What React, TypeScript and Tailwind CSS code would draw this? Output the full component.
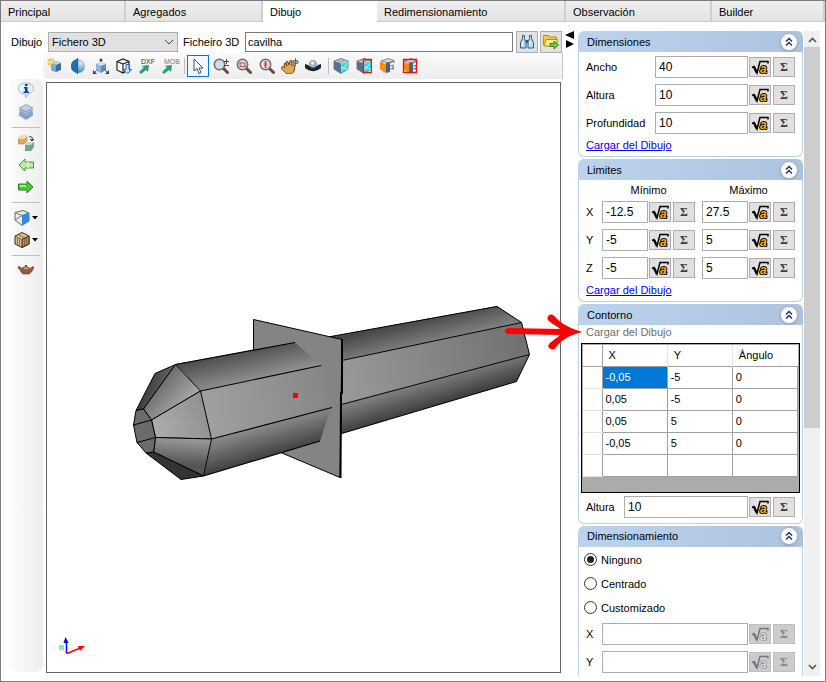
import React, { useState } from 'react';

const tabs = [
  { name: 'Principal', width: 'w-[125px]' },
  { name: 'Agregados', width: 'w-[137px]' },
  { name: 'Dibujo', width: 'w-[114px]' },
  { name: 'Redimensionamiento', width: 'w-[189px]' },
  { name: 'Observación', width: 'w-[146px]' },
  { name: 'Builder', width: 'flex-1' },
];

const points = [
  ['-0,05', '-5', '0'],
  ['0,05', '-5', '0'],
  ['0,05', '5', '0'],
  ['-0,05', '5', '0'],
  ['', '', ''],
];

const Icon = ({ children, w = 16 }: { children: React.ReactNode; w?: number }) => (
  <svg width={w} height="16" viewBox={`0 0 ${w} 16`} className="shrink-0" aria-hidden="true">
    {children}
  </svg>
);

/* ---------- toolbar icons ---------- */

const NewCubeIcon = () => (
  <Icon>
    <path d="M4 5l5-2 5 2v7l-5 2-5-2z" fill="#3f6f9f" />
    <path d="M4 5l5-2 5 2-5 2z" fill="#b4d2ea" />
    <path d="M4 5l5 2v7l-5-2z" fill="#7ba8d2" />
    <path d="M4 0v8M0 4h8M1 1l6 6M7 1L1 7" stroke="#e9b52c" strokeWidth="1.200" />
    <circle cx="4" cy="4" r="1.500" fill="#fff8c8" />
  </Icon>
);

const SphereIcon = () => (
  <Icon>
    <defs>
      <radialGradient id="sphere" cx="0.700" cy="0.300" r="0.700">
        <stop offset="0" stopColor="#d6ecfa" />
        <stop offset="1" stopColor="#3c82bd" />
      </radialGradient>
    </defs>
    <circle cx="8" cy="8" r="7" fill="url(#sphere)" />
    <path d="M8 1a7 7 0 0 0 0 14z" fill="#1b72b0" />
    <path d="M7.500 0v16" stroke="#e01818" />
  </Icon>
);

const AxesCubeIcon = () => (
  <Icon>
    <path d="M8 1v6M1 15l4-4M15 15l-4-4" stroke="#555" />
    <path d="M8 0l2 3H6zM0 16v-4l4 4zM16 16v-4l-4 4z" fill="#443c3c" />
    <path d="M3 6l5-2 5 2v6l-5 3-5-3z" fill="#5b8cbf" />
    <path d="M3 6l5-2 5 2-5 2z" fill="#cfe3f4" />
    <path d="M3 6l5 2v7l-5-3z" fill="#8db6dc" />
  </Icon>
);

const CubeDownIcon = () => (
  <Icon>
    <path d="M1 3.500L7 1l6 2.500v8L7 15l-6-3z M1 3.500L7 6l6-2.500M7 6v9" fill="#fff" stroke="#222" strokeWidth="1.200" />
    <path d="M10 6.500h3v5h2.500L11.500 15.500 7.500 11.500H10z" fill="#cfe4ff" stroke="#1b5fd0" />
  </Icon>
);

const ExportIcon = ({ label, color }: { label: string; color: string }) => (
  <Icon w={20}>
    <path d="M2 14l5-5-3-1 8-1-1 7-2-2-5 4z" fill="#2f9e77" />
    <text x="4" y="6" fontSize="7" fill={color}>{label}</text>
  </Icon>
);

const CursorIcon = () => (
  <Icon>
    <path d="M4 1v12l3-2.500 2 5 2-1-2-4.500h4z" fill="#fff" stroke="#3c4a70" />
  </Icon>
);

const ZoomIcon = ({ children, lens = '#cfdce4' }: { children?: React.ReactNode; lens?: string }) => (
  <Icon>
    <path d="M9.500 9.500l5 5" stroke="#6a4a3e" strokeWidth="3" strokeLinecap="round" />
    <circle cx="6.500" cy="6.500" r="5.200" fill={lens} stroke="#6d6d6d" strokeWidth="1.500" />
    {children}
  </Icon>
);

const HandIcon = () => (
  <Icon w={18}>
    <path d="M1 9c1-1 2 0 3 1L3 6c0-1 2-1 2 0l1 2-1-4c0-1 2-1 2 0l1 3 1-4c0-1 2-1 2 0v5l1-1c1-1 2 0 2 1l-1 5c-1 2-2 3-4 3H7c-2 0-3-2-6-5-1-1-1-2 0-2z" fill="#e0aa55" stroke="#6e4112" />
    <path d="M14.500 0v8M10.500 4h8M12.500 2.500h4v3h-4z" stroke="#555" fill="none" strokeWidth="0.800" />
  </Icon>
);

const OrbitIcon = () => (
  <Icon>
    <path d="M0 6l3 1c2 2 8 2 10 0l3-1v4l-3 2c-3 1.500-7 1.500-10 0L0 10z" fill="#222" />
    <circle cx="8" cy="6" r="3.600" fill="#9db9d8" stroke="#6f8cad" strokeWidth="0.700" />
    <circle cx="7.500" cy="5" r="1.500" fill="#eef6ff" />
  </Icon>
);

const ViewCubeIcon = ({ boxed = false }: { boxed?: boolean }) => (
  <Icon>
    <path d="M1 3l7-2.500L15 3v8l-7 4.500L1 11z" fill="#c8d4d8" stroke="#55636f" strokeWidth="0.800" />
    <path d="M4 2l7 2.500M12 2L5 4.500" stroke="#7d8a90" strokeWidth="0.600" />
    <path d="M1 3l7 2.500v10L1 11z" fill="#5d6d8f" />
    <path d="M8.500 6L15 3.500V11l-6.500 4z" fill="#1fe0e6" />
    <path d="M8.500 12l6-7M8.500 9l6 2" stroke="#e8ffff" strokeWidth="0.800" />
    {boxed && <path d="M7.500 1.500h8v13h-8z" fill="none" stroke="#f01010" strokeWidth="1.300" />}
  </Icon>
);

const SectionCubeIcon = ({ boxed = false }: { boxed?: boolean }) => (
  <Icon>
    <path d="M2 3l7-2.500 6 2L9 5z" fill="#d4d8da" stroke="#666" strokeWidth="0.700" />
    <path d="M7 5l4-1v10l-4 1z" fill="#536079" />
    <path d="M11 5l4-2M11 8l4-1M11 11l4-1M15 3v2M14 8v4" stroke="#777" fill="none" />
    <path d="M1 3.500L7 6v9l-6-3.500z" fill="#fb8c0c" />
    {boxed && <path d="M1.500 1.500h13v13h-13z" fill="none" stroke="#f01010" strokeWidth="1.300" />}
  </Icon>
);

/* ---------- sidebar icons ---------- */

const InfoIcon = () => (
  <Icon>
    <path d="M8 1c4 0 7.500 2 7.500 5.500S12 12 9.500 12L8 15.500 6.500 12C3 12 .5 10 .5 6.500S4 1 8 1z" fill="#e8f2fc" stroke="#9db8d4" />
    <path d="M7 2h2.500v2H7zM6 5h3.500v4.500H11V11H5.500V9.500H7v-3H6z" fill="#0a3d9a" />
  </Icon>
);

const LayersIcon = () => (
  <Icon>
    <g stroke="#6f8fb4" strokeWidth="0.700">
      <path d="M1 11l7-3 7 3-7 4.500z" fill="#87a5c9" />
      <path d="M1 9l7-3 7 3-7 4z" fill="#98b3d3" />
      <path d="M1 6.500l7-3 7 3-7 4z" fill="#a6bedb" />
      <path d="M1 4l7-3.500L15 4 8 8z" fill="#bdd0e6" />
    </g>
  </Icon>
);

const SwapIcon = () => (
  <Icon>
    <path d="M0 4l3-3h6v5l-3 3H0z" fill="#d9a566" stroke="#b07d41" strokeWidth="0.500" />
    <path d="M0 4l3-3h6L7 4z" fill="#f4d9ae" />
    <path d="M7 10l3-3h6v5l-3 4H7z" fill="#6fa58c" />
    <path d="M7 10l3-3h6l-3 3z" fill="#b9dccb" />
    <path d="M11 2c2-1 4 0 3 3M12 4l2 2 2-2" stroke="#222" fill="none" />
  </Icon>
);

const ArrowLeftIcon = () => (
  <Icon>
    <path d="M1 8l6-6v3h8.500v6H7v3z" fill="#b9e8a8" stroke="#4c9a3a" />
    <path d="M10 5v6" stroke="#fff" />
  </Icon>
);

const ArrowRightIcon = () => (
  <Icon>
    <path d="M15 8L9 2v3H.5v6H9v3z" fill="#4cc636" stroke="#2a8a1c" />
    <path d="M2 7h6" stroke="#a8ec94" strokeWidth="2" />
  </Icon>
);

const FaceCubeIcon = () => (
  <Icon>
    <path d="M1 2.500L9 .5l6 2.500v8l-7 4.500L1 10z" fill="#e6e8ea" stroke="#686868" />
    <path d="M1 2.500l7 3 7-2.500M1 10l7-4.500" stroke="#777" fill="none" />
    <path d="M8 5.500L15 3v8l-7 4.500z" fill="#2d8be8" />
  </Icon>
);

const WoodCubeIcon = () => (
  <Icon>
    <path d="M1 4l7-3.500L15 4v8l-7 3.500L1 12z" fill="#dcbf92" stroke="#3b2a17" />
    <path d="M8 7.500L15 4v8l-7 3.500z" fill="#b58d5c" stroke="#3b2a17" />
    <path d="M1 4l7 3.500M3.500 5.500v7M5.500 6.500v7M10.500 7v7M12.500 6v7M4 2.500l7 3.500" stroke="#6b5030" strokeWidth="0.700" />
  </Icon>
);

const TeapotIcon = () => (
  <Icon>
    <g transform="translate(0 -2)">
      <path d="M0 6c1-1 3 0 4 2 0-3 7-3 8 0 1-1 2-3 4-2-1 3-3 6-5 7H5C3 12 3 9 0 7z" fill="#96593c" stroke="#5b3322" strokeWidth="0.600" />
      <path d="M7 4h2v1.500H7z" fill="#5b3322" />
      <path d="M6 8c1-1 3-1 4 0" stroke="#e0b296" strokeWidth="1.300" fill="none" />
    </g>
  </Icon>
);

const Caret = () => (
  <svg width="6" height="4" viewBox="0 0 6 4" aria-hidden="true">
    <path d="M0 0h6L3 3.500z" />
  </svg>
);

const BinocularsIcon = () => (
  <Icon>
    <g fill="#b5dbe6" stroke="#2d5f88">
      <path d="M3.500 1.500h2v3l1.500 4v5.500H1.500V8.500l2-4z" />
      <path d="M10.500 1.500h2v3l2 4V14H9V8.500l1.500-4z" />
    </g>
    <path d="M7 6h2v3H7z" fill="#2d5f88" />
    <path d="M3.500 7v5M11 7v5" stroke="#fff" />
  </Icon>
);

const FolderIcon = () => (
  <Icon>
    <path d="M.5 3.500v-2h5l1 1.500h7v8H.5z" fill="#f3cf45" stroke="#b78c12" />
    <path d="M3 5.500h11.500L13 12H1z" fill="#fdeb9c" stroke="#b78c12" />
    <path d="M7 9.500h4V7l4.500 4-4.500 4v-2.500H7z" fill="#7ac943" stroke="#3b7f1a" />
  </Icon>
);

const Separator = () => <span className="h-4 w-px shrink-0 bg-[#bdbdbd]" />;

/* ---------- form parts ---------- */

const FormulaButton = ({ disabled = false }: { disabled?: boolean }) => (
  <button
    aria-label="Fórmula"
    disabled={disabled}
    className="flex h-5 w-[22px] shrink-0 items-center justify-center border border-[#adadad] bg-[#e1e1e1] disabled:border-[#bfbfbf] disabled:bg-[#cccccc]"
  >
    <svg width="18" height="16" viewBox="0 0 18 16" className="shrink-0" aria-hidden="true">
      <path d="M1 8.500l2-1L6 14 9 2.500h8v2" fill="none" stroke={disabled ? '#777' : '#000'} strokeWidth="1.500" />
      <path d="M3 8l3 6" stroke={disabled ? '#777' : '#000'} strokeWidth="2.400" />
      <text
        x="9"
        y="14"
        fontSize="12"
        fontWeight="bold"
        fontStyle="italic"
        fill={disabled ? '#ddd' : '#ffb400'}
        stroke={disabled ? '#777' : '#000'}
        strokeWidth={disabled ? 1 : 2}
        paintOrder="stroke"
      >
        a
      </text>
    </svg>
  </button>
);

const SigmaButton = ({ disabled = false }: { disabled?: boolean }) => (
  <button
    aria-label="Suma"
    disabled={disabled}
    className="flex h-5 w-[22px] shrink-0 items-center justify-center border border-[#adadad] bg-[#e1e1e1] font-['Liberation_Serif',serif] text-xs leading-4 font-bold text-[#3c3c3c] disabled:border-[#bfbfbf] disabled:bg-[#cccccc] disabled:text-[#858585]"
  >
    Σ
  </button>
);

const NumberBox = ({ id, value, label, disabled = false }: { id?: string; value: string; label?: string; disabled?: boolean }) => (
  <div className="flex min-w-0 flex-1 items-center gap-[2px]">
    <input
      id={id}
      aria-label={label}
      defaultValue={value}
      disabled={disabled}
      className="-mr-px h-[22px] w-0 min-w-0 flex-1 border border-[#abadb3] bg-white px-[3px] text-xs"
    />
    <FormulaButton disabled={disabled} />
    <SigmaButton disabled={disabled} />
  </div>
);

const Field = ({ id, label, value, labelWidth, disabled }: { id: string; label: string; value: string; labelWidth: string; disabled?: boolean }) => (
  <div className="flex items-center">
    <label htmlFor={id} className={`${labelWidth} shrink-0`}>{label}</label>
    <NumberBox id={id} value={value} disabled={disabled} />
  </div>
);

const Panel = ({ title, className, children }: { title: string; className: string; children: React.ReactNode }) => (
  <section>
    <header className="flex h-[21px] items-center justify-between rounded-t-md bg-linear-to-r from-[#bcd3ee] to-[#adc2de] pr-[5px] pl-[9px]">
      <h2>{title}</h2>
      <button aria-label={`Contraer ${title}`} className="flex size-[18px] items-center justify-center rounded-full border border-[#a3aec0] bg-white shadow-sm">
        <svg width="8" height="10" viewBox="0 0 8 10" aria-hidden="true">
          <path d="M1 4.500l3-3 3 3M1 8.500l3-3 3 3" fill="none" stroke="#1a2b6d" strokeWidth="1.400" />
        </svg>
      </button>
    </header>
    <div className={`border-x border-[#b8d0ea] px-[7px] ${className}`}>{children}</div>
  </section>
);

const LoadLink = () => (
  <a href="#dibujo" className="text-[#0000ff] underline">Cargar del Dibujo</a>
);

/* ---------- 3D view ---------- */

const Viewport = () => (
  <svg viewBox="47 83 513 589" className="min-w-0 flex-1" role="img" aria-label="cavilha">
    <defs>
      <linearGradient id="top" x1="240" y1="350" x2="248" y2="384" gradientUnits="userSpaceOnUse">
        <stop offset="0" stopColor="#4c4c4c" />
        <stop offset="1" stopColor="#959595" />
      </linearGradient>
      <linearGradient id="middle" x1="205" y1="410" x2="330" y2="385" gradientUnits="userSpaceOnUse">
        <stop offset="0" stopColor="#a0a0a0" />
        <stop offset="1" stopColor="#868686" />
      </linearGradient>
      <linearGradient id="bottom" x1="262" y1="424" x2="272" y2="459" gradientUnits="userSpaceOnUse">
        <stop offset="0" stopColor="#8e8e8e" />
        <stop offset="1" stopColor="#3a3a3a" />
      </linearGradient>
      <linearGradient id="backTop" x1="420" y1="319" x2="426" y2="344" gradientUnits="userSpaceOnUse">
        <stop offset="0" stopColor="#474747" />
        <stop offset="1" stopColor="#808080" />
      </linearGradient>
      <linearGradient id="backMiddle" x1="342" y1="385" x2="525" y2="340" gradientUnits="userSpaceOnUse">
        <stop offset="0" stopColor="#999" />
        <stop offset="1" stopColor="#717171" />
      </linearGradient>
      <linearGradient id="backBottom" x1="430" y1="381" x2="438" y2="407" gradientUnits="userSpaceOnUse">
        <stop offset="0" stopColor="#7c7c7c" />
        <stop offset="1" stopColor="#393939" />
      </linearGradient>
      <linearGradient id="coneLight" x1="150" y1="440" x2="208" y2="415" gradientUnits="userSpaceOnUse">
        <stop offset="0" stopColor="#b0b0b0" />
        <stop offset="1" stopColor="#929292" />
      </linearGradient>
      <linearGradient id="coneTop" x1="155" y1="385" x2="180" y2="408" gradientUnits="userSpaceOnUse">
        <stop offset="0" stopColor="#6a6a6a" />
        <stop offset="1" stopColor="#a4a4a4" />
      </linearGradient>
      <linearGradient id="coneLow" x1="180" y1="438" x2="178" y2="464" gradientUnits="userSpaceOnUse">
        <stop offset="0" stopColor="#9a9a9a" />
        <stop offset="1" stopColor="#555" />
      </linearGradient>
      <linearGradient id="coneDark" x1="140" y1="385" x2="165" y2="395" gradientUnits="userSpaceOnUse">
        <stop offset="0" stopColor="#2f2f2f" />
        <stop offset="1" stopColor="#686868" />
      </linearGradient>
    </defs>

    {/* rear shaft */}
    <path d="M328 337L497 306 521.500 322.500 330 363z" fill="url(#backTop)" />
    <path d="M330 363L521.500 322.500 529.500 354.500 330 407.500z" fill="url(#backMiddle)" />
    <path d="M330 407.500L529.500 354.500 516.500 381.500 330 437z" fill="url(#backBottom)" />
    <path d="M328 337L497 306.500 521.500 322.500 529.500 354.500 516.500 381.500 330 437M330 363L521.500 322.500M330 407.500L529.500 354.500" fill="none" stroke="#000" />

    {/* plate */}
    <path d="M253.500 319.500L342 339.500 340 477.500 253.500 441z" fill="#848484" stroke="#000" />
    <path d="M342 339V394M341 392L340.500 478" fill="none" stroke="#000" strokeWidth="2" />

    {/* front shaft */}
    <path d="M175.500 364L295 342.500 321 365.500 200.500 391z" fill="url(#top)" />
    <path d="M200.500 391L321 365.500 331 407.500 211.500 439z" fill="url(#middle)" />
    <path d="M211.500 439L331 407.500 320 441 203.500 476z" fill="url(#bottom)" />
    <path d="M175.500 364.500L295 342.500M200.500 391L321 365.500M211.500 439L332 407.500M203.500 476L320 441" fill="none" stroke="#000" strokeWidth="1.200" />

    {/* cone */}
    <g stroke="#000" strokeLinejoin="round">
      <path d="M155 373.500L175.500 364.500 143.500 409 136 410.500z" fill="url(#coneDark)" />
      <path d="M175.500 364.500L200.500 391 151.500 420 143.500 409z" fill="url(#coneTop)" />
      <path d="M200.500 391L211.500 439 155.500 437.500 151.500 420z" fill="url(#coneLight)" />
      <path d="M211.500 439L203.500 476 153.500 452 155.500 437.500z" fill="url(#coneLow)" />
      <path d="M203.500 476L181 479.500 146 453 153.500 452z" fill="#333" />
      <path d="M136 410.500L143.500 409 151.500 420 155.500 437.500 153.500 452 146 453 137 442.500 133.500 425z" fill="#6b6b6b" />
      <path d="M133.500 425L151.500 420M137 442.500L155.500 437.500" />
    </g>

    <path d="M293 393h5v5h-5z" fill="#ff0000" />

    {/* axes */}
    <path d="M59 645h5v5h-5z" fill="#90ee90" />
    <path d="M63 650l3 3" stroke="#90ee90" strokeDasharray="1 1" />
    <path d="M67 653.500L79 648.500" stroke="#ff0000" strokeWidth="1.500" />
    <path d="M78 646l7 0-5 5z" fill="#ff0000" />
    <path d="M66.500 653.500V640" stroke="#0000ff" strokeWidth="1.500" />
    <path d="M65.500 637l3 6h-5z" fill="#0000ff" />
  </svg>
);

const ToolButton = ({ label, wide = false, children }: { label: string; wide?: boolean; children: React.ReactNode }) => (
  <button aria-label={label} className={`flex h-[22px] items-center justify-center gap-[2px] ${wide ? 'w-7' : 'w-[23px]'}`}>
    {children}
  </button>
);

const App = () => {
  const [mode, setMode] = useState('Ninguno');

  return (
    <div className="flex min-h-screen flex-col border border-[#7c7c7c] bg-white pb-[5px] font-['Liberation_Sans',Arial,sans-serif] text-[11px] leading-4 text-black">
      <nav className="flex h-[21px]">
        {tabs.map((tab) => (
          <button
            key={tab.name}
            className={`${tab.width} border-b pt-[2px] pl-[7px] text-left ${
              tab.name === 'Dibujo'
                ? 'border-white bg-white'
                : 'border-r-2 border-r-[#cfcfcf] border-b-[#c8c8c8] bg-linear-to-b from-[#efefef] to-[#e3e3e3]'
            }`}
          >
            {tab.name}
          </button>
        ))}
      </nav>

      <main className="flex flex-1 pt-[9px] pr-[5px]">
        <div className="flex min-w-0 flex-1 flex-col pl-2">
          <div className="flex h-[22px] items-center pl-[2px]">
            <label htmlFor="tipo" className="w-[37px]">Dibujo</label>
            <div className="relative">
              <select id="tipo" className="h-5 w-[130px] appearance-none border border-[#adadad] bg-[#e1e1e1] pl-[3px]">
                <option>Fichero 3D</option>
              </select>
              <svg width="10" height="6" viewBox="0 0 10 6" className="pointer-events-none absolute top-[7px] right-1" aria-hidden="true">
                <path d="M1 1l4 4 4-4" fill="none" stroke="#444" />
              </svg>
            </div>
            <label htmlFor="fichero" className="w-[67px] pl-[5px]">Ficheiro 3D</label>
            <input id="fichero" defaultValue="cavilha" className="h-5 min-w-0 flex-1 border border-[#7a7a7a] px-[2px]" />
            <button aria-label="Buscar" className="ml-[3px] flex h-[22px] w-[22px] items-center justify-center border border-[#adadad] bg-[#e1e1e1]">
              <BinocularsIcon />
            </button>
            <button aria-label="Abrir" className="mr-px ml-[2px] flex h-[22px] w-[22px] items-center justify-center border border-[#adadad] bg-[#e1e1e1]">
              <FolderIcon />
            </button>
          </div>

          <div className="ml-[34px] flex h-[26px] items-center rounded-l-md border-r border-[#c4c4c4] bg-linear-to-b from-[#fafafa] to-[#ededed]">
            <ToolButton label="Nuevo"><NewCubeIcon /></ToolButton>
            <ToolButton label="Esfera"><SphereIcon /></ToolButton>
            <ToolButton label="Ejes"><AxesCubeIcon /></ToolButton>
            <ToolButton label="Importar"><CubeDownIcon /></ToolButton>
            <ToolButton label="Exportar DXF"><ExportIcon label="DXF" color="#333" /></ToolButton>
            <ToolButton label="Exportar MOB"><ExportIcon label="MOB" color="#777" /></ToolButton>
            <span className="w-[3px]" />
            <Separator />
            <button aria-label="Seleccionar" className="ml-[2px] flex size-[22px] items-center justify-center border border-[#0078d7] bg-[#f3f8fd]">
              <CursorIcon />
            </button>
            <ToolButton label="Zoom">
              <ZoomIcon><path d="M11 3.500h5M13.500 1v5M11 7.500h5" stroke="#444" /></ZoomIcon>
            </ToolButton>
            <ToolButton label="Zoom ventana">
              <ZoomIcon><path d="M4 5h5v3.500H4zM3 5h2M8 8.500h2" stroke="#c0504d" fill="none" /></ZoomIcon>
            </ToolButton>
            <ToolButton label="Zoom total">
              <ZoomIcon lens="#e3dede"><path d="M6.500 2.500l1.500 2H5zM5.500 5h2v3h-2zM5 8.500h3l-1.500 2z" fill="#e02020" /></ZoomIcon>
            </ToolButton>
            <ToolButton label="Mover"><HandIcon /></ToolButton>
            <ToolButton label="Orbitar"><OrbitIcon /></ToolButton>
            <span className="w-1" />
            <Separator />
            <ToolButton label="Vista"><ViewCubeIcon /></ToolButton>
            <ToolButton label="Vista cara"><ViewCubeIcon boxed /></ToolButton>
            <ToolButton label="Corte"><SectionCubeIcon /></ToolButton>
            <ToolButton label="Corte cara"><SectionCubeIcon boxed /></ToolButton>
          </div>

          <div className="flex flex-1">
            <div className="mb-1 flex w-[34px] flex-col items-center rounded-lg bg-linear-to-r from-[#fcfcfc] to-[#eeeeee]">
              <ToolButton label="Información"><InfoIcon /></ToolButton>
              <ToolButton label="Capas"><LayersIcon /></ToolButton>
              <span className="my-1 h-px w-7 bg-[#c0c0c0]" />
              <ToolButton label="Convertir"><SwapIcon /></ToolButton>
              <ToolButton label="Anterior"><ArrowLeftIcon /></ToolButton>
              <ToolButton label="Siguiente"><ArrowRightIcon /></ToolButton>
              <span className="my-1 h-px w-7 bg-[#c0c0c0]" />
              <ToolButton label="Caras" wide><FaceCubeIcon /><Caret /></ToolButton>
              <ToolButton label="Material" wide><WoodCubeIcon /><Caret /></ToolButton>
              <span className="my-1 h-px w-7 bg-[#c0c0c0]" />
              <ToolButton label="Render"><TeapotIcon /></ToolButton>
            </div>
            <div className="relative mt-[3px] mr-[2px] mb-[3px] ml-[3px] flex min-w-0 flex-1 border border-[#646464]">
              <Viewport />
              {/* pointer to the contour link */}
              <svg width="80" height="38" viewBox="503 313 80 38" className="absolute top-[230px] right-[-23px] z-10" aria-hidden="true">
                <path
                  d="M508 328L560 329C555 324 549 323 547.500 319 547 316 550 313.500 553 315 558 319 560 325 582.500 332 566 336 561 341 555 348.500 552 351 547 348 548.500 345 551 341 556 339 560 335L508 334C504 333 504 329 508 328z"
                  fill="#ff0000"
                />
              </svg>
            </div>
          </div>
        </div>

        <div className="w-[15px] shrink-0 pl-[2px]">
          <svg width="10" height="18" viewBox="0 0 10 18" aria-hidden="true">
            <path d="M9 0v8L0 4zM1 9v8l8-4z" />
          </svg>
        </div>

        <aside className="flex w-[225px] shrink-0 flex-col gap-[2px]">
          <Panel title="Dimensiones" className="flex flex-col gap-[6px] rounded-b-md border-b pt-1 pb-[3px]">
            <Field id="ancho" label="Ancho" value="40" labelWidth="w-[69px]" />
            <Field id="altura" label="Altura" value="10" labelWidth="w-[69px]" />
            <Field id="profundidad" label="Profundidad" value="10" labelWidth="w-[69px]" />
            <div className="-mt-[3px]"><LoadLink /></div>
          </Panel>

          <Panel title="Limites" className="flex flex-col gap-[6px] rounded-b-md border-b pt-[2px] pb-[3px]">
            <div className="-mb-[3px] flex gap-[7px] pl-4">
              <span className="flex-1 text-center">Mínimo</span>
              <span className="flex-1 text-center">Máximo</span>
            </div>
            {[['X', '-12.5', '27.5'], ['Y', '-5', '5'], ['Z', '-5', '5']].map(([axis, min, max]) => (
              <div key={axis} className="flex items-center">
                <span className="w-4">{axis}</span>
                <div className="flex flex-1 gap-[7px]">
                  <NumberBox value={min} label={`${axis} mínimo`} />
                  <NumberBox value={max} label={`${axis} máximo`} />
                </div>
              </div>
            ))}
            <div className="-mt-[3px]"><LoadLink /></div>
          </Panel>

          <Panel title="Contorno" className="rounded-b-md border-b pb-[5px]">
            <a href="#contorno" className="-mt-px block pb-[3px] text-[#6d6d6d]">Cargar del Dibujo</a>
            <div className="-mx-[5px] border border-black bg-[#ababab] p-px pb-[15px]">
              <table className="w-full table-fixed border-collapse bg-white text-left">
                <thead>
                  <tr className="h-[21px] border-b border-[#a0a0a0]">
                    <td className="w-[19px] border-r border-[#a0a0a0]" />
                    <th className="border-r border-[#e2e2e2] pl-[6px] font-normal">X</th>
                    <th className="border-r border-[#e2e2e2] pl-[6px] font-normal">Y</th>
                    <th className="pl-[6px] font-normal">Ângulo</th>
                  </tr>
                </thead>
                <tbody>
                  {points.map((row, i) => (
                    <tr key={i} className="h-[22px]">
                      <td className="border-r border-b border-r-[#a0a0a0] border-b-[#e2e2e2]" />
                      {row.map((cell, j) => (
                        <td key={j} className={`border-r border-b border-[#a0a0a0] pl-[3px] ${i === 0 && j === 0 ? 'bg-[#0078d7] text-white' : ''}`}>
                          {cell}
                        </td>
                      ))}
                    </tr>
                  ))}
                </tbody>
              </table>
            </div>
            <div className="pt-[3px]">
              <Field id="contorno-altura" label="Altura" value="10" labelWidth="w-[38px]" />
            </div>
          </Panel>

          <Panel title="Dimensionamiento" className="flex flex-col gap-[6px] pt-[5px] pb-[3px]">
            <div className="-ml-[2px] flex flex-col gap-2 pb-[1px]">
              {['Ninguno', 'Centrado', 'Customizado'].map((name) => (
                <label key={name} className="flex items-center gap-1">
                  <input
                    type="radio"
                    name="modo"
                    checked={mode === name}
                    onChange={() => setMode(name)}
                    className="size-[13px] appearance-none rounded-full border border-[#333] bg-white bg-clip-content p-[2px] checked:bg-[#222]"
                  />
                  {name}
                </label>
              ))}
            </div>
            <Field id="dim-x" label="X" value="" labelWidth="w-4" disabled />
            <Field id="dim-y" label="Y" value="" labelWidth="w-4" disabled />
          </Panel>
        </aside>

        <div className="ml-px flex w-4 shrink-0 flex-col items-center bg-[#f0f0f0] py-[6px]">
          <svg width="9" height="6" viewBox="0 0 9 6" className="shrink-0" aria-hidden="true">
            <path d="M1 5l3.500-3.500L8 5" fill="none" stroke="#555" strokeWidth="1.600" />
          </svg>
          <div className="mt-1 h-[381px] w-full bg-[#cdcdcd]" />
          <svg width="9" height="6" viewBox="0 0 9 6" className="mt-auto shrink-0" aria-hidden="true">
            <path d="M1 1l3.500 3.500L8 1" fill="none" stroke="#555" strokeWidth="1.600" />
          </svg>
        </div>
      </main>
    </div>
  );
};

export default App;
